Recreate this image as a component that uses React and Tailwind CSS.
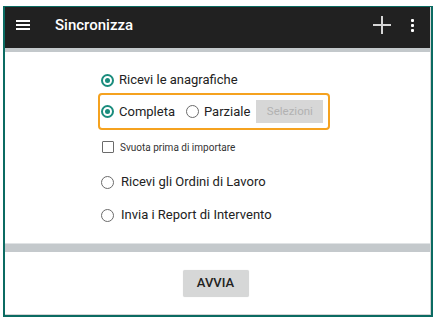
import React from "react";

const Radio = ({ checked }) =>
  checked ? (
    <span className="w-[13px] h-[13px] shrink-0 rounded-full border-2 border-[#1a8c7d] flex items-center justify-center">
      <span className="w-[5px] h-[5px] rounded-full bg-[#1a8c7d]" />
    </span>
  ) : (
    <span className="block w-[13px] h-[13px] shrink-0 rounded-full border-[1.5px] border-[#6b6b6b]" />
  );

export default function App() {
  return (
    <div
      className="w-[439px] h-[321px] bg-white pt-[6px] pl-[3px]"
      style={{ fontFamily: "Roboto, 'Noto Sans', sans-serif" }}
    >
      <div className="w-[430px] h-[311px] border-2 border-t border-[#0b6b62] flex flex-col">
        <div className="flex-1 flex flex-col border-r border-b border-[#d4d4d4]">
          {/* Header */}
          <div className="h-[41px] bg-[#212121] shrink-0">
            <div className="h-[36px] flex items-center pl-[11px] pr-[16px]">
              <div className="flex flex-col gap-[2px] w-[14px]">
                <span className="h-[2px] bg-white" />
                <span className="h-[2px] bg-white" />
                <span className="h-[2px] bg-white" />
              </div>
              <span className="ml-[25px] text-[15px] font-medium text-white leading-none">
                Sincronizza
              </span>
              <div className="flex-1" />
              <svg width="18" height="18" viewBox="0 0 18 18">
                <path d="M9 0V18M0 9H18" stroke="#d6d6d6" strokeWidth="2" />
              </svg>
              <div className="ml-[20px] flex flex-col gap-[2px] items-center">
                <span className="w-[3px] h-[3px] bg-white rounded-[1px]" />
                <span className="w-[3px] h-[3px] bg-white rounded-[1px]" />
                <span className="w-[3px] h-[3px] bg-white rounded-[1px]" />
              </div>
            </div>
          </div>
          <div className="h-[4px] bg-[#c3c8cb] shrink-0" />

          {/* Content */}
          <div className="h-[191px] shrink-0 flex flex-col pl-[93px] pt-[18px] text-[13px] text-[#222]">
            <div className="h-[20px] ml-[3px] flex items-center gap-[5px]">
              <Radio checked />
              <span>Ricevi le anagrafiche</span>
            </div>
            <div className="mt-[3px] w-[232px] h-[37px] border-2 border-[#f5a21f] rounded-[4px] flex items-center pl-px pr-[4px]">
              <Radio checked />
              <span className="ml-[5px]">Completa</span>
              <span className="ml-[11px] flex">
                <Radio />
              </span>
              <span className="ml-[5px]">Parziale</span>
              <div className="ml-[6px] w-[67px] h-[23px] bg-[#d7d7d7] flex items-center justify-center text-[11.5px] text-[#b2b2b2]">
                Selezioni
              </div>
            </div>
            <div className="mt-[7px] h-[20px] ml-[4px] flex items-center gap-[6px]">
              <span className="w-[12px] h-[12px] border-[1.5px] border-[#6b6b6b] rounded-[1px]" />
              <span className="text-[10px] text-[#333]">Svuota prima di importare</span>
            </div>
            <div className="mt-[15px] h-[20px] ml-[3px] flex items-center gap-[7px]">
              <Radio />
              <span>Ricevi gli Ordini di Lavoro</span>
            </div>
            <div className="mt-[13px] h-[20px] ml-[3px] flex items-center gap-[7px]">
              <Radio />
              <span>Invia i Report di Intervento</span>
            </div>
          </div>

          <div className="h-px bg-[#e0e3e5] shrink-0" />
          <div className="h-[8px] bg-[#c4c9cc] shrink-0" />

          <div className="flex-1 flex items-center justify-center pr-[4px]">
            <div className="w-[66px] h-[27px] bg-[#d6d7d7] rounded-[2px] shadow-[0_0_1px_rgba(0,0,0,0.15)] flex items-center justify-center text-[13px] font-medium text-[#222]">
              AVVIA
            </div>
          </div>
        </div>
      </div>
    </div>
  );
}
